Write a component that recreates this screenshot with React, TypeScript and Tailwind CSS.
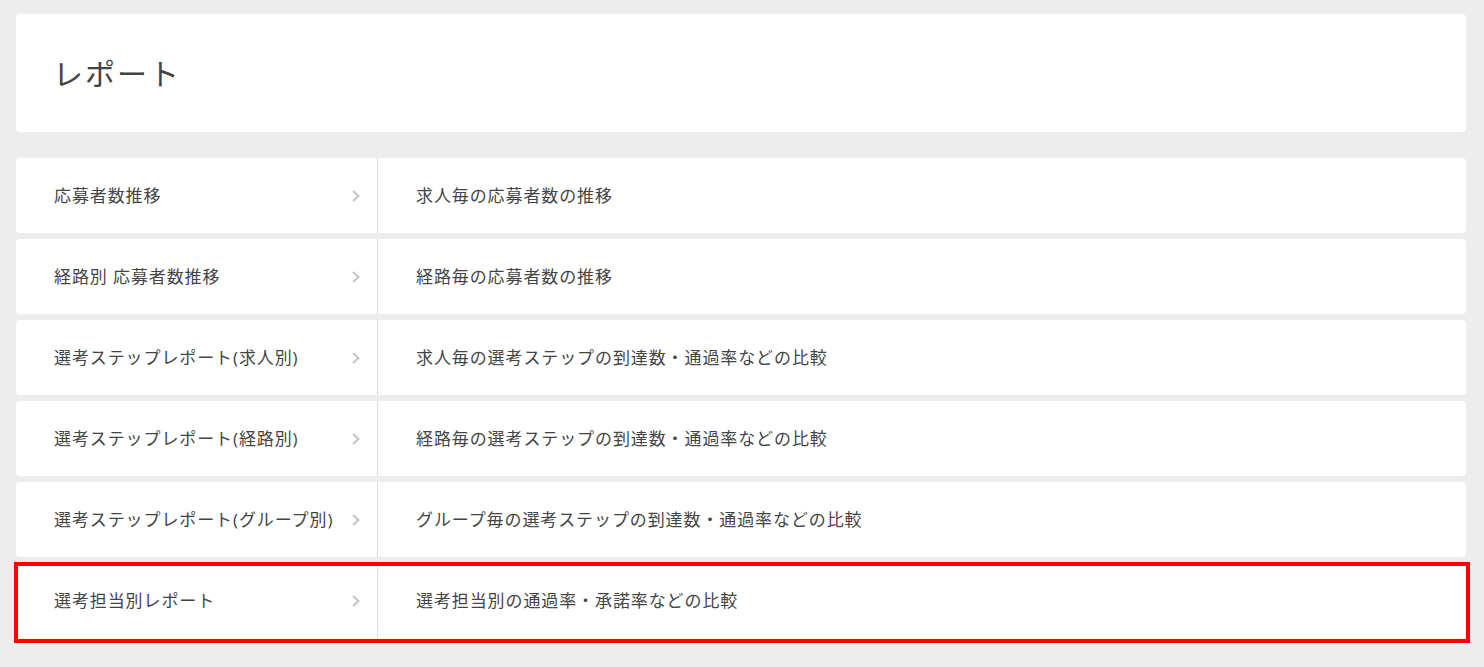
const rows = [
  { name: "応募者数推移", desc: "求人毎の応募者数の推移" },
  { name: "経路別 応募者数推移", desc: "経路毎の応募者数の推移" },
  { name: "選考ステップレポート(求人別)", desc: "求人毎の選考ステップの到達数・通過率などの比較" },
  { name: "選考ステップレポート(経路別)", desc: "経路毎の選考ステップの到達数・通過率などの比較" },
  { name: "選考ステップレポート(グループ別)", desc: "グループ毎の選考ステップの到達数・通過率などの比較" },
  { name: "選考担当別レポート", desc: "選考担当別の通過率・承諾率などの比較", highlight: true },
];

const Chevron = () => (
  <svg width="10" height="14" viewBox="0 0 10 14" className="shrink-0">
    <path d="M2 2 L7.5 7 L2 12" fill="none" stroke="#c4c4c4" strokeWidth="2" />
  </svg>
);

const App = () => {
  return (
    <div
      className="min-h-[667px] bg-[#ededed] pl-4 pr-[18px] pt-[14px] pb-6 text-[#444]"
      style={{ fontFamily: '"Open Sans", "Noto Sans CJK JP", sans-serif' }}
    >
      <div className="bg-white rounded h-[118px] flex items-center pl-[37px]">
        <h1 className="text-[30px] tracking-[2px] text-[#444]">レポート</h1>
      </div>
      <div className="mt-[26px] flex flex-col gap-[6px]">
        {rows.map((r) => (
          <div key={r.name} className="relative">
            <div className="bg-white rounded h-[75px] flex text-[17px] tracking-[0.9px]">
              <div className="w-[362px] shrink-0 flex items-center justify-between pl-[38px] pr-[16px] border-r border-[#dcdcdc]">
                <span>{r.name}</span>
                <Chevron />
              </div>
              <div className="flex items-center pl-[38px]">{r.desc}</div>
            </div>
            {r.highlight && (
              <div className="absolute -left-[2px] -top-[1px] -right-[4px] -bottom-[5px] border-4 border-[#ff0000]"></div>
            )}
          </div>
        ))}
      </div>
    </div>
  );
};

export default App;
